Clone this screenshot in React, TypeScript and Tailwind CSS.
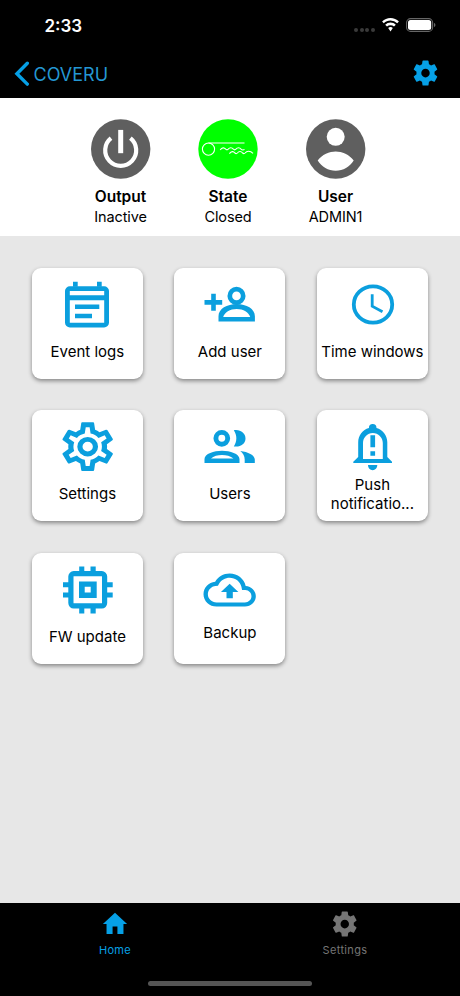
import type { ReactNode } from "react";
import clsx from "clsx";

const COG =
  "M12,15.5A3.5,3.5 0 0,1 8.5,12A3.5,3.5 0 0,1 12,8.5A3.5,3.5 0 0,1 15.5,12A3.5,3.5 0 0,1 12,15.5M19.43,12.97C19.47,12.65 19.5,12.33 19.5,12C19.5,11.67 19.47,11.34 19.43,11L21.54,9.37C21.73,9.22 21.78,8.95 21.66,8.73L19.66,5.27C19.54,5.05 19.27,4.96 19.05,5.05L16.56,6.05C16.04,5.66 15.5,5.32 14.87,5.07L14.5,2.42C14.46,2.18 14.25,2 14,2H10C9.75,2 9.54,2.18 9.5,2.42L9.13,5.07C8.5,5.32 7.96,5.66 7.44,6.05L4.95,5.05C4.73,4.96 4.46,5.05 4.34,5.27L2.34,8.73C2.21,8.95 2.27,9.22 2.46,9.37L4.57,11C4.53,11.34 4.5,11.67 4.5,12C4.5,12.33 4.53,12.65 4.57,12.97L2.46,14.63C2.27,14.78 2.21,15.05 2.34,15.27L4.34,18.73C4.46,18.95 4.73,19.03 4.95,18.95L7.44,17.94C7.96,18.34 8.5,18.68 9.13,18.93L9.5,21.58C9.54,21.82 9.75,22 10,22H14C14.25,22 14.46,21.82 14.5,21.58L14.87,18.93C15.5,18.67 16.04,18.34 16.56,17.94L19.05,18.95C19.27,19.03 19.54,18.95 19.66,18.73L21.66,15.27C21.78,15.05 21.73,14.78 21.54,14.63L19.43,12.97Z";

const COG_OUTLINE =
  "M12,8A4,4 0 0,1 16,12A4,4 0 0,1 12,16A4,4 0 0,1 8,12A4,4 0 0,1 12,8M12,10A2,2 0 0,0 10,12A2,2 0 0,0 12,14A2,2 0 0,0 14,12A2,2 0 0,0 12,10M10,22C9.75,22 9.54,21.82 9.5,21.58L9.13,18.93C8.5,18.68 7.96,18.34 7.44,17.94L4.95,18.95C4.73,19.03 4.46,18.95 4.34,18.73L2.34,15.27C2.21,15.05 2.27,14.78 2.46,14.63L4.57,12.97L4.5,12L4.57,11L2.46,9.37C2.27,9.22 2.21,8.95 2.34,8.73L4.34,5.27C4.46,5.05 4.73,4.96 4.95,5.05L7.44,6.05C7.96,5.66 8.5,5.32 9.13,5.07L9.5,2.42C9.54,2.18 9.75,2 10,2H14C14.25,2 14.46,2.18 14.5,2.42L14.87,5.07C15.5,5.32 16.04,5.66 16.56,6.05L19.05,5.05C19.27,4.96 19.54,5.05 19.66,5.27L21.66,8.73C21.79,8.95 21.73,9.22 21.54,9.37L19.43,11L19.5,12L19.43,13L21.54,14.63C21.73,14.78 21.79,15.05 21.66,15.27L19.66,18.73C19.54,18.95 19.27,19.04 19.05,18.95L16.56,17.95C16.04,18.34 15.5,18.68 14.87,18.93L14.5,21.58C14.46,21.82 14.25,22 14,22H10M11.25,4L10.88,6.61C9.68,6.86 8.62,7.5 7.85,8.39L5.44,7.35L4.69,8.65L6.8,10.2C6.4,11.37 6.4,12.64 6.8,13.8L4.68,15.36L5.43,16.66L7.86,15.62C8.63,16.5 9.68,17.14 10.87,17.38L11.24,20H12.76L13.13,17.39C14.32,17.14 15.37,16.5 16.14,15.62L18.57,16.66L19.32,15.36L17.2,13.81C17.6,12.64 17.6,11.37 17.2,10.2L19.31,8.65L18.56,7.35L16.15,8.39C15.38,7.5 14.32,6.86 13.12,6.62L12.75,4H11.25Z";

const CLOUD_UPLOAD =
  "M19.35 10.04C18.67 6.59 15.64 4 12 4 9.11 4 6.6 5.64 5.35 8.04 2.34 8.36 0 10.91 0 14c0 3.31 2.69 6 6 6h13c2.76 0 5-2.24 5-5 0-2.64-2.05-4.78-4.65-4.96zM19 18H6c-2.21 0-4-1.79-4-4 0-2.05 1.53-3.76 3.56-3.97l1.07-.11.5-.95C8.08 7.14 9.94 6 12 6c2.62 0 4.88 1.86 5.39 4.43l.3 1.5 1.53.11c1.56.1 2.78 1.41 2.78 2.96 0 1.65-1.35 3-3 3zM8 13h2.55v3h2.9v-3H16l-4-4z";

type Tile = {
  label: string;
  icon: ReactNode;
  labelClass: string;
};

const tiles: Tile[] = [
  {
    label: "Event logs",
    labelClass: "mt-[7.5px]",
    icon: (
      <>
        <rect x="9.9" y="12.6" width="39.2" height="36.5" rx="2.5" fill="none" stroke="currentColor" strokeWidth="4.8" />
        <path d="M15.5 5.8h4.7v5h-4.7zM39.5 5.8h4.7v5h-4.7zM9 19.2h41v5H9zM17.5 28.5h24.3v4.6H17.5zM17.5 37.8h17v4.5h-17z" />
      </>
    ),
  },
  {
    label: "Add user",
    labelClass: "mt-[7.5px]",
    icon: (
      <>
        <path d="M11.7 17.7h4.6v6.4h6.4v4.6h-6.4v6h-4.6v-6H5v-4.6h6.7z" />
        <circle cx="37" cy="19.9" r="6.7" fill="none" stroke="currentColor" strokeWidth="4.7" />
        <path
          fillRule="evenodd"
          d="M19 45.4v-5.2c0-7.2 8.5-12.1 18.2-12.1s18.2 4.9 18.2 12.1v5.2zM23.7 41h27c-1-4.6-7-8.1-13.5-8.1S24.700 36.400 23.700 41z"
        />
      </>
    ),
  },
  {
    label: "Time windows",
    labelClass: "mt-[7.5px] whitespace-nowrap",
    icon: (
      <g fill="none" stroke="currentColor">
        <ellipse cx="30.5" cy="28.5" rx="19.2" ry="18.2" strokeWidth="3.8" />
        <path d="M29.7 18.3v11.9l10.3 5.6" strokeWidth="2.8" />
      </g>
    ),
  },
  {
    label: "Settings",
    labelClass: "mt-[7px]",
    icon: <path d={COG_OUTLINE} transform="translate(-.9 -.5) scale(2.59 2.43)" />,
  },
  {
    label: "Users",
    labelClass: "mt-[7px]",
    icon: (
      <>
        <circle cx="22.3" cy="20.3" r="5.9" fill="none" stroke="currentColor" strokeWidth="4.9" />
        <path d="M34.3 12.3c6.4-1.2 11.7 2.8 11.7 8.1s-5.3 9.2-11.7 8c3.4-4.9 3.4-11.2 0-16.1z" />
        <path
          fillRule="evenodd"
          d="M5 45v-4c0-5.3 9.5-8.3 17.5-8.3S40 35.7 40 41v4zM11.5 40.6H34c-3-2.4-7.3-3.5-11.5-3.5s-8.4 1.1-11 3.5z"
        />
        <path d="M40.8 32.9c7.6 1 14.5 3.9 14.5 8.6V45H45.2v-3.5c0-3.7-1.7-6.4-4.4-8.6z" />
      </>
    ),
  },
  {
    label: "Push notificatio...",
    labelClass: "-mt-[2px]",
    icon: (
      <path
        fillRule="evenodd"
        d="M26.4 9.9a3.8 3.8 0 1 1 7.6 0c6.3 1.8 10.8 7.6 10.8 14.3v14.9l4.7 4.6V45H10.8v-1.3l4.9-4.6V24.2c0-6.7 4.4-12.5 10.7-14.3zM30.3 14.9c-5.4 0-9.8 4.5-9.8 10V41h19.8V24.9c0-5.5-4.5-10-10-10zM27.9 17.3h4.7v12h-4.7zM27.9 33.3h4.7v4.5h-4.7zM25.5 47.1h9.3c0 3-2.1 5.2-4.65 5.2s-4.65-2.2-4.65-5.2z"
      />
    ),
  },
  {
    label: "FW update",
    labelClass: "mt-[7.5px]",
    icon: (
      <>
        <rect x="13.4" y="12.7" width="33.7" height="32.2" rx="2.8" fill="none" stroke="currentColor" strokeWidth="5.2" />
        <path fillRule="evenodd" d="M21.5 20.5h17.7v16.4H21.5zM27.2 25.8v5.7h6v-5.7z" />
        <path d="M21.7 5.5h5.1V11h-5.1zM33 5.5h5.2V11H33zM21.7 47h5.1v5.5h-5.1zM33 47h5.2v5.5H33zM5.5 21.2h6v5.1h-6zM5.5 31.5h6v5.1h-6zM49.2 21.2h6v5.1h-6zM49.2 31.5h6v5.1h-6z" />
      </>
    ),
  },
  {
    label: "Backup",
    labelClass: "mt-[3px]",
    icon: <path d={CLOUD_UPLOAD} transform="translate(4 4.3) scale(2.18 2.06)" />,
  },
];

function StatusItem({ title, value, children }: { title: string; value: string; children: ReactNode }) {
  return (
    <div className="flex w-[107.5px] flex-col items-center text-black">
      <svg width="60" height="60" viewBox="0 0 60 60">
        {children}
      </svg>
      <span className="mt-[8px] text-[15.5px] leading-5 font-semibold">{title}</span>
      <span className="text-[14.5px] leading-5 tracking-[-0.1px]">{value}</span>
    </div>
  );
}

function StatusBar() {
  return (
    <div className="flex h-[50px] items-center justify-between pr-[24px] pl-[44.5px]">
      <span className="mt-px text-[17px] leading-5 font-semibold text-white">2:33</span>
      <div className="flex items-center">
        <div className="mt-[9px] mr-[7px] flex gap-[1.7px]">
          {[0, 1, 2, 3].map((i) => (
            <span key={i} className="size-1 rounded-full bg-[#3a3a3a]" />
          ))}
        </div>
        <svg width="17" height="14" viewBox="0 0 17 14" className="mr-[7px] fill-white">
          <path d="M8.5 0c3.2 0 6.2 1.3 8.4 3.5L15.2 5.3A9.5 9.5 0 0 0 8.5 2.6c-2.6 0-4.9 1-6.7 2.7L.1 3.5A12 12 0 0 1 8.5 0z" />
          <path d="M8.5 4.5c2 0 3.9.8 5.3 2.2l-1.8 1.9a5 5 0 0 0-7 0L3.2 6.7a7.5 7.5 0 0 1 5.3-2.2z" />
          <path d="M8.5 9.1c.9 0 1.7.4 2.3 1L8.5 13.4l-2.3-3.3c.6-.6 1.4-1 2.3-1z" />
        </svg>
        <svg width="30" height="14" viewBox="0 0 30 14">
          <rect x=".6" y=".6" width="26" height="12.8" rx="4" fill="none" stroke="#666" strokeWidth="1.1" />
          <rect x="2" y="2.1" width="23.2" height="9.8" rx="2.5" fill="#fff" />
          <path d="M28 5v4c.9-.4 1.4-1.1 1.4-2S28.9 5.4 28 5z" fill="#666" />
        </svg>
      </div>
    </div>
  );
}

export default function App() {
  return (
    <div className="flex h-[996px] w-[460px] flex-col overflow-hidden bg-[#e7e7e7] font-['Inter',sans-serif]">
      <header className="h-[98px] shrink-0 bg-black">
        <StatusBar />
        <div className="flex h-[46px] items-center justify-between pr-[20.5px] pl-[13.5px] text-[#06a0e6]">
          <div className="flex items-center">
            <svg width="15" height="26" viewBox="0 0 15 26" fill="none" stroke="currentColor" strokeWidth="3.4">
              <path d="M13.3 3.3 2.9 13.7l10.4 10.4" strokeLinecap="round" />
            </svg>
            <span className="mt-[3px] ml-[5px] text-[18px] leading-6 text-[#2497d3]">COVERU</span>
          </div>
          <svg width="29" height="30" viewBox="0 0 24 24" preserveAspectRatio="none" fill="currentColor">
            <path d={COG} />
          </svg>
        </div>
      </header>

      <section className="flex h-[138px] shrink-0 justify-center bg-white pt-[21px] pr-[4px]">
        <StatusItem title="Output" value="Inactive">
          <circle cx="29.7" cy="30" r="29.7" fill="#5f5f5f" />
          <path d="M20 19.2a15.5 15.5 0 1 0 19.4 0" fill="none" stroke="#fff" strokeWidth="4.2" />
          <path d="M27.2 10.9h5v23.3h-5z" fill="#fff" />
        </StatusItem>
        <StatusItem title="State" value="Closed">
          <circle cx="30" cy="30" r="29.7" fill="#00ff00" />
          <g fill="none" stroke="#fff" strokeWidth="1.1">
            <circle cx="10.5" cy="30.1" r="6.1" />
            <path d="M10.5 24h36" />
            <path d="M22.2 30.8c1.8-2.4 4-2.6 5.5-.6q1.3 1.3 2.5 0c1.5-2 3.7-2 5.2 0q1.3 1.3 2.5 0c1.5-2 3.7-2 5.2 0q1.3 1.3 3.4.4" />
            <path d="M31.4 34.6c1.8-2.4 4-2.6 5.5-.6q1.3 1.3 2.5 0c1.5-2 3.7-2 5.2 0q1.3 1.3 2.5 0c1.5-2 5-2.6 7.9.4" />
          </g>
        </StatusItem>
        <StatusItem title="User" value="ADMIN1">
          <circle cx="29.7" cy="30" r="29.7" fill="#5f5f5f" />
          <circle cx="29.7" cy="17.8" r="9" fill="#fff" />
          <path d="M11.7 41.5c4-6 12-9.1 18-9.1s14 3.1 18 9.1c-4 6.3-10.5 10.3-18 10.3s-14-4-18-10.3z" fill="#fff" />
        </StatusItem>
      </section>

      <main className="grid grow auto-rows-[111px] grid-cols-[repeat(3,111px)] content-start gap-[31.5px] pt-[31.5px] pl-[31.9px]">
        {tiles.map((tile) => (
          <button
            key={tile.label}
            className="flex flex-col items-center rounded-[9px] bg-white pt-2 text-black shadow-[0_2px_4px_rgba(0,0,0,0.42)]"
          >
            <svg width="61" height="60" viewBox="-0.5 0 61 60" fill="currentColor" className="shrink-0 text-[#0b9fde]">
              {tile.icon}
            </svg>
            <span className={clsx("max-w-[104px] text-[15px] leading-[18.5px]", tile.labelClass)}>{tile.label}</span>
          </button>
        ))}
      </main>

      <nav className="flex h-[93px] shrink-0 flex-col items-center bg-black">
        <div className="grid w-full grid-cols-2 pt-[6px] text-[11px] leading-[14px] tracking-[0.35px]">
          <div className="flex flex-col items-center text-[#06a0e6]">
            <svg width="30" height="30" viewBox="-0.4 0 24.8 24" preserveAspectRatio="none" fill="currentColor">
              <path d="M10,20V14H14V20H19V12H22L12,3L2,12H5V20H10Z" />
            </svg>
            <span className="mt-[4px]">Home</span>
          </div>
          <div className="flex flex-col items-center text-[#757575]">
            <svg width="30" height="30" viewBox="-0.2 0 24.8 24" preserveAspectRatio="none" fill="currentColor">
              <path d={COG} />
            </svg>
            <span className="mt-[4px]">Settings</span>
          </div>
        </div>
        <div className="mt-[23.5px] h-[5.5px] w-[164px] rounded-full bg-[#555]" />
      </nav>
    </div>
  );
}
